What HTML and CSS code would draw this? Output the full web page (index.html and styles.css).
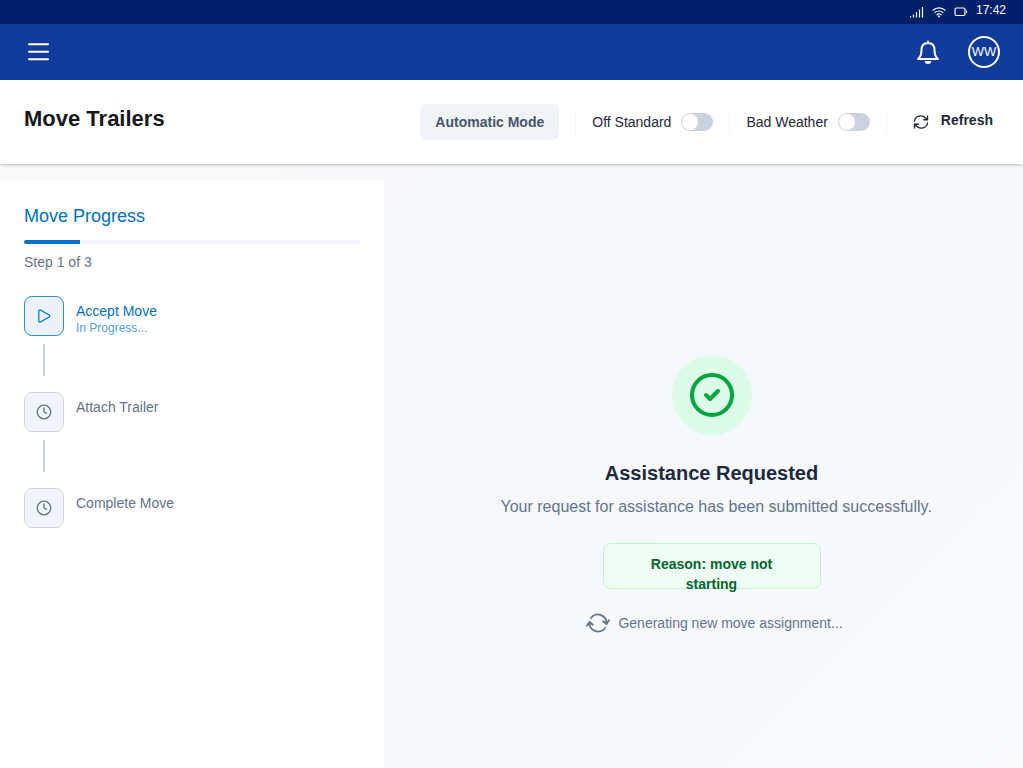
FILE: index.html
```html
<!DOCTYPE html>
<html lang="en">
<head>
<meta charset="utf-8">
<meta name="viewport" content="width=device-width, initial-scale=1">
<title>Move Trailers</title>
<link rel="stylesheet" href="styles.css">
</head>
<body>
<div class="status-bar">
  <svg class="signal" width="14" height="12" viewBox="0 0 14 12" fill="none" stroke="currentColor" stroke-width="1.2"><path d="M.5 10v1.500M3.500 8.500v3M6.500 6v5.500M9.500 3.500v8M12.500 1v10.500"/></svg>
  <svg class="wifi" width="14" height="12" viewBox="0 0 14 12" fill="none" stroke="currentColor" stroke-width="1.200" stroke-linecap="round"><path d="M1 4.200a8.700 8.700 0 0 1 12 0M3 6.600a5.800 5.800 0 0 1 8 0M5 8.800a3 3 0 0 1 4 0"/><circle cx="7" cy="10.500" r=".4"/></svg>
  <svg class="battery" width="14" height="10" viewBox="0 0 14 10" fill="none" stroke="currentColor" stroke-width="1.200"><rect x="1" y="1" width="10" height="7.500" rx="1.500"/><path d="M12.500 3.500v2.500"/></svg>
  <span class="clock">17:42</span>
</div>
<header class="app-bar">
  <button class="icon-button menu" aria-label="Menu"><svg width="21" height="20" viewBox="0 0 21 20" fill="none" stroke="currentColor" stroke-width="2" stroke-linecap="round"><path d="M1 2.200h19M1 9.700h19M1 17.200h19"/></svg></button>
  <button class="icon-button bell" aria-label="Notifications"><svg width="24" height="26" viewBox="0 0 24 26" fill="none" stroke="currentColor" stroke-width="2" stroke-linejoin="round"><path d="M2 20h20c-2.500-2-3.500-4.500-3.500-9 0-4.500-2.500-7-6.500-7S5.500 6.500 5.500 11c0 4.500-1 7-3.500 9z"/><path d="M12 2.500v1" stroke-linecap="round"/><path d="M8.800 22h6.400a3.200 3 0 0 1-6.400 0z" fill="currentColor" stroke="none"/></svg></button>
  <button class="avatar" aria-label="Account">WW</button>
</header>
<section class="title-bar">
  <h1>Move Trailers</h1>
  <div class="tools">
    <button class="mode">Automatic Mode</button>
    <div class="tool"><label for="off-standard">Off Standard</label><input class="switch" id="off-standard" type="checkbox" role="switch"></div>
    <div class="tool"><label for="bad-weather">Bad Weather</label><input class="switch" id="bad-weather" type="checkbox" role="switch"></div>
    <div class="tool last"><button class="refresh"><svg width="16" height="16" viewBox="0 0 16 16" fill="none" stroke="currentColor" stroke-width="1.400" stroke-linecap="round" stroke-linejoin="round"><path d="M1.500 7a6.300 6 0 0 1 11-3L14.500 5.800M14.500 2v3.800H10.700M14.500 9a6.300 6 0 0 1-11 3L1.500 10.200M1.500 14v-3.800H5.300"/></svg><span>Refresh</span></button></div>
  </div>
</section>
<div class="workspace">
  <aside class="progress">
    <h2>Move Progress</h2>
    <div class="track" role="progressbar" aria-label="Move progress" aria-valuemin="0" aria-valuemax="3" aria-valuenow="1"><div class="fill"></div></div>
    <p class="count">Step 1 of 3</p>
    <ol class="steps">
      <li class="step active">
        <div class="tile"><svg width="16" height="16" viewBox="0 0 16 16" fill="none" stroke="currentColor" stroke-width="1.200" stroke-linejoin="round"><path d="M2.800 3v10c0 1 .8 1.400 1.600 1l8.800-5c.9-.5.9-1.500 0-2L4.400 2c-.8-.4-1.600 0-1.600 1z"/></svg></div>
        <div class="label"><span>Accept Move</span><small>In Progress...</small></div>
      </li>
      <li class="step">
        <div class="tile"><svg width="16" height="16" viewBox="0 0 16 16" fill="none" stroke="currentColor" stroke-width="1.300" stroke-linecap="round" stroke-linejoin="round"><circle cx="8" cy="8" r="6.800"/><path d="M8 4v4l2.500 1.300"/></svg></div>
        <div class="label"><span>Attach Trailer</span></div>
      </li>
      <li class="step">
        <div class="tile"><svg width="16" height="16" viewBox="0 0 16 16" fill="none" stroke="currentColor" stroke-width="1.300" stroke-linecap="round" stroke-linejoin="round"><circle cx="8" cy="8" r="6.800"/><path d="M8 4v4l2.500 1.300"/></svg></div>
        <div class="label"><span>Complete Move</span></div>
      </li>
    </ol>
  </aside>
  <main class="result">
    <div class="badge"><svg width="44" height="44" viewBox="0 0 44 44" fill="none" stroke="currentColor" stroke-width="4" stroke-linecap="round" stroke-linejoin="round"><circle cx="22" cy="22" r="20"/><path d="M16 22l4 4 8-8"/></svg></div>
    <h2>Assistance Requested</h2>
    <p class="message">Your request for assistance has been submitted successfully.</p>
    <div class="reason">Reason: move not starting</div>
    <p class="pending"><svg width="24" height="20" viewBox="0 0 24 20" fill="none" stroke="currentColor" stroke-width="1.900" stroke-linecap="round" stroke-linejoin="round"><path d="M5 5a8.600 8.600 0 0 1 15.500 6M17.200 8.300l3.300 2.700L23 7.300M19 15a8.600 8.600 0 0 1-15.500-6M6.800 11.700L3.500 9 1 12.700"/></svg><span>Generating new move assignment...</span></p>
  </main>
</div>
</body>
</html>
```
FILE: styles.css
```css
* { box-sizing: border-box; }
body {
  margin: 0;
  min-height: 100vh;
  display: flex;
  flex-direction: column;
  background: linear-gradient(135deg, #fafafb 0%, #f5f8fb 50%, #f8fafc 100%);
  color: #1e293b;
  font: 14px/20px "Liberation Sans", Arial, sans-serif;
}
h1, h2, p, ol { margin: 0; padding: 0; }
svg { display: block; flex: none; }
button { margin: 0; border: 0; padding: 0; background: none; color: inherit; font: inherit; cursor: pointer; }

.status-bar {
  height: 24px;
  padding: 0 17px 0 0;
  display: flex;
  justify-content: flex-end;
  align-items: center;
  background: #00206a;
  color: #fff;
}
.wifi { margin-left: 8px; }
.battery { margin-left: 8px; }
.clock { margin: 0 0 4px 8px; font-size: 12px; line-height: 16px; }

.app-bar {
  height: 56px;
  padding: 0 23px 0 28px;
  display: flex;
  align-items: center;
  background: #113b9a;
  color: #fff;
}
.bell { margin-left: auto; }
.avatar {
  width: 32px;
  height: 32px;
  margin-left: 28px;
  border: 2px solid #fff;
  border-radius: 50%;
  font-size: 13px;
}

.title-bar {
  height: 84px;
  padding: 0 30px 0 24px;
  display: flex;
  align-items: center;
  justify-content: space-between;
  background: #fff;
  box-shadow: 0 1px 3px rgba(0, 0, 0, .25);
}
h1 { padding-bottom: 6px; color: #18181b; font-size: 22px; line-height: 28px; }
.tools { display: flex; align-items: center; gap: 16px; }
.mode {
  height: 36px;
  padding: 0 15px;
  border-radius: 6px;
  background: #f0f4f9;
  color: #475569;
  font-weight: bold;
}
.tool {
  height: 24px;
  padding-left: 16px;
  display: flex;
  align-items: center;
  gap: 10px;
  border-left: 1px solid #f1f5f9;
}
.last { padding-left: 26px; }
.switch {
  appearance: none;
  width: 32px;
  height: 18px;
  margin: 0;
  padding: 1px;
  display: flex;
  border-radius: 9px;
  background: #cbd1df;
}
.switch::before { content: ""; width: 16px; height: 16px; border-radius: 50%; background: #fff; }
.switch:checked { justify-content: flex-end; background: #0070c8; }
.refresh { display: flex; align-items: center; gap: 12px; font-weight: bold; }
.refresh span { padding-bottom: 4px; }

.workspace { flex: 1; display: flex; gap: 16px; padding-top: 16px; }
.progress { flex: none; width: 384px; padding: 24px; background: #fff; }
.progress h2 { color: #0070c0; font-size: 18px; line-height: 24px; font-weight: normal; }
.track { height: 4px; margin-top: 12px; border-radius: 2px; background: #f1f5f9; overflow: hidden; }
.fill { width: 16.67%; height: 100%; background: #0070c8; }
.count { margin-top: 8px; color: #64748b; }
.steps { margin-top: 24px; display: flex; flex-direction: column; gap: 16px; list-style: none; }
.step { display: grid; grid-template-columns: 40px 1fr; column-gap: 12px; color: #64748b; }
.step:not(:last-child)::after { content: ""; width: 2px; height: 32px; margin-top: 8px; justify-self: center; background: #cbd5e1; }
.tile {
  height: 40px;
  display: grid;
  place-items: center;
  border: 1px solid #cbd5e1;
  border-radius: 8px;
  background: #f1f5f9;
}
.label { padding-top: 5px; display: flex; flex-direction: column; }
.label small { font-size: 12px; line-height: 15px; color: #4da0da; }
.active { color: #0070c0; }
.active .tile { border-color: #2d8ed3; background: #e9f1fa; }

.result {
  flex: 1;
  padding: 24px;
  display: flex;
  flex-direction: column;
  align-items: center;
  justify-content: center;
  text-align: center;
}
.badge {
  width: 80px;
  height: 80px;
  margin-top: 40px;
  display: grid;
  place-items: center;
  border-radius: 50%;
  background: #dcfce7;
  color: #00a63e;
}
.result h2 { margin-top: 24px; font-size: 20px; line-height: 28px; }
.message { width: 422px; margin-top: 8px; color: #64748b; font-size: 16px; line-height: 24px; text-align: left; white-space: nowrap; }
.reason {
  width: 218px;
  height: 46px;
  margin-top: 24px;
  padding: 10px 40px;
  border: 1px solid #b9f8cf;
  border-radius: 8px;
  background: #f0fdf4;
  color: #016630;
  font-weight: bold;
}
.pending { margin-top: 24px; padding-left: 6px; display: flex; align-items: center; gap: 8px; color: #64748b; }
```
